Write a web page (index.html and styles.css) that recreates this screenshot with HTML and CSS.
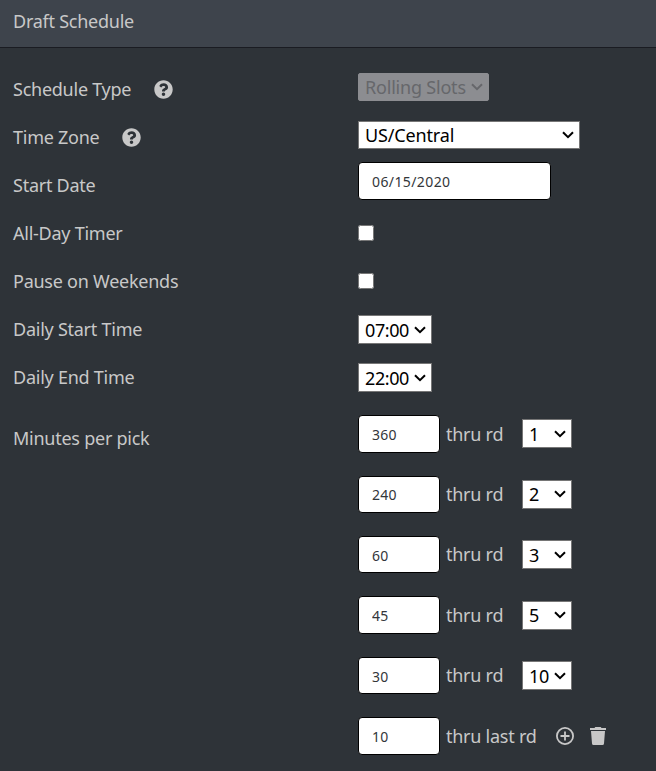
FILE: index.html
```
<!DOCTYPE html>
<html lang="en">
	<head>
		<meta charset="utf-8">
		<title>Draft Schedule</title>
		<link rel="stylesheet" href="styles.css">
	</head>
	<body>
		<!-- icons -->
		<svg class="sprite">
			<symbol id="help" viewBox="0 0 512 512">
				<path d="M504 256c0 137-111 248-248 248S8 393 8 256 119 8 256 8s248 111 248 248zM262.700 90c-54.500 0-89.300 23-116.500 63.800-3.500 5.300-2.400 12.400 2.700 16.300l34.700 26.300c5.200 3.900 12.600 3 16.700-2.100 17.900-22.700 30.100-35.800 57.300-35.800 20.400 0 45.700 13.100 45.700 33 0 15-12.400 22.700-32.500 34C247.100 238.500 216 254.900 216 296v4c0 6.600 5.400 12 12 12h56c6.600 0 12-5.400 12-12v-1.300c0-28.500 83.200-29.600 83.200-106.700 0-58-60.200-102-116.500-102zM256 338c-25.400 0-46 20.600-46 46s20.600 46 46 46 46-20.600 46-46-20.600-46-46-46z"/>
			</symbol>
		</svg>

		<h1 class="header">Draft Schedule</h1>

		<form class="schedule">
			<div class="row">
				<div class="label">Schedule Type <svg class="help"><use href="#help"/></svg></div>
				<div class="field"><select class="type" disabled><option>Rolling Slots</option></select></div>
			</div>
			<div class="row">
				<div class="label">Time Zone <svg class="help"><use href="#help"/></svg></div>
				<div class="field"><select class="zone"><option>US/Central</option></select></div>
			</div>
			<div class="row">
				<div class="label">Start Date</div>
				<div class="field start"><input class="text date" type="text" value="06/15/2020"></div>
			</div>
			<div class="row">
				<div class="label">All-Day Timer</div>
				<div class="field check"><input type="checkbox"></div>
			</div>
			<div class="row">
				<div class="label">Pause on Weekends</div>
				<div class="field check"><input type="checkbox"></div>
			</div>
			<div class="row">
				<div class="label">Daily Start Time</div>
				<div class="field time"><select><option>07:00</option></select></div>
			</div>
			<div class="row">
				<div class="label">Daily End Time</div>
				<div class="field time"><select><option>22:00</option></select></div>
			</div>

			<!-- minutes per pick -->
			<div class="row minutes">
				<div class="label">Minutes per pick</div>
				<div class="picks">
					<div class="pick"><input class="text" type="text" value="360"><span>thru rd</span><select><option>1</option></select></div>
					<div class="pick"><input class="text" type="text" value="240"><span>thru rd</span><select><option>2</option></select></div>
					<div class="pick"><input class="text" type="text" value="60"><span>thru rd</span><select><option>3</option></select></div>
					<div class="pick"><input class="text" type="text" value="45"><span>thru rd</span><select><option>5</option></select></div>
					<div class="pick"><input class="text" type="text" value="30"><span>thru rd</span><select><option>10</option></select></div>
					<div class="pick last">
						<input class="text" type="text" value="10"><span>thru last rd</span>
						<svg class="add" viewBox="0 0 18 18"><circle cx="9" cy="9" r="8.100"/><path d="M9 4.500v9M4.500 9h9"/></svg>
						<svg class="trash" viewBox="0 0 16 18"><path d="M0 1h4.500l.8-1h5.400l.8 1H16v2H0zM1 4h14l-1 12.500q-.1 1.500-1.500 1.500h-9Q2.100 18 2 16.500z"/></svg>
					</div>
				</div>
			</div>
		</form>
	</body>
</html>
```
FILE: styles.css
```
body {
	margin: 0;
	background-color: #2e3338;
	color: #c8c8c8;
	font: 18px/24px "Noto Sans", sans-serif;
	letter-spacing: -0.25px;
}

.sprite {
	display: none;
}

.header {
	box-sizing: border-box;
	height: 48px;
	margin: 0;
	padding: 9px 13px;
	background-color: #3e444c;
	border-bottom: 1px solid #1a1c22;
	font-size: 18px;
	font-weight: normal;
}

.schedule {
	padding-top: 17px;
}

.row {
	display: grid;
	grid-template-columns: 345px 1fr;
	height: 48px;
	padding-left: 13px;
}

.label {
	display: flex;
	align-items: center;
}

.help {
	width: 19px;
	height: 19px;
	margin-left: 22.5px;
	fill: #c8c8c8;
}

/* controls sit a little above the label's centre */
.field {
	display: flex;
	align-items: center;
	padding-bottom: 4px;
}

.field.start {
	padding-bottom: 8px;
}

.field.check {
	padding-bottom: 0;
}

.field.time {
	padding-bottom: 0;
	padding-top: 1px;
}

select {
	appearance: none;
	box-sizing: border-box;
	height: 28px;
	margin: 0;
	padding: 0 6px;
	background: #fff url("data:image/svg+xml,%3Csvg xmlns='http://www.w3.org/2000/svg' width='12' height='8'%3E%3Cpath d='M1 1.200l5 5 5-5' fill='none' stroke='black' stroke-width='2'/%3E%3C/svg%3E") no-repeat right 5px center;
	border: 1px solid #767676;
	border-radius: 0;
	color: #000;
	font: 18px "Noto Sans", sans-serif;
	letter-spacing: -0.4px;
}

.type {
	width: 131px;
	background-color: #8c8d91;
	background-image: url("data:image/svg+xml,%3Csvg xmlns='http://www.w3.org/2000/svg' width='12' height='8'%3E%3Cpath d='M1 1.200l5 5 5-5' fill='none' stroke='%2366676b' stroke-width='2'/%3E%3C/svg%3E");
	border-color: #8c8d91;
	border-radius: 2px;
	color: #66676b;
	letter-spacing: -0.2px;
	opacity: 1;
}

.zone {
	width: 222px;
	letter-spacing: -0.15px;
}

.time select {
	width: 74px;
	height: 29px;
}

.text {
	box-sizing: border-box;
	width: 82px;
	height: 37.5px;
	margin: 0;
	padding: 1px 13px 0;
	background-color: #fff;
	border: 1px solid #000;
	border-radius: 4px;
	color: #33363a;
	font: 14px "Noto Sans", sans-serif;
	letter-spacing: 0.2px;
}

.date {
	width: 193px;
	padding-top: 0;
	letter-spacing: 0.4px;
}

input[type="checkbox"] {
	width: 16px;
	height: 16px;
	margin: 0;
}

/* minutes per pick */
.minutes {
	height: auto;
	align-items: start;
	padding-top: 14.1px;
}

.minutes .label {
	height: 46px;
}

.picks {
	display: grid;
	grid-auto-rows: 37.5px;
	row-gap: 22.95px;
}

.pick {
	display: flex;
	align-items: center;
}

.pick span {
	width: 76px;
	margin-left: 6px;
	padding-bottom: 0.5px;
}

.pick select {
	width: 50px;
	height: 29px;
}

.last span {
	width: auto;
}

.add {
	width: 18px;
	height: 18px;
	margin-left: 19px;
	fill: none;
	stroke: #c8c8c8;
	stroke-width: 1.8;
}

.trash {
	width: 16px;
	height: 18px;
	margin-left: 16px;
	fill: #c8c8c8;
}
```
